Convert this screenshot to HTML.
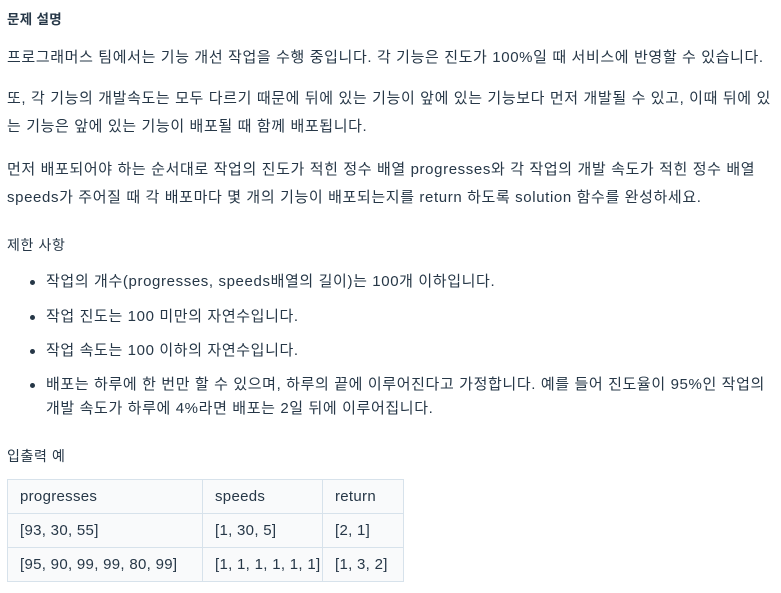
<!DOCTYPE html>
<html><head><meta charset="utf-8"><style>
body{margin:0;background:#fff;width:781px;height:593px;overflow:hidden;font-family:"Liberation Sans","Noto Sans CJK KR",sans-serif;color:#263747;letter-spacing:0.62px}
.a{position:absolute;left:7px;white-space:nowrap;font-size:15px;}
.s{font-size:14px}
.d{position:absolute;left:30px;width:5px;height:5px;border-radius:50%;background:#263747}
table{position:absolute;left:7px;top:479px;border-collapse:collapse;font-size:15px;background:#f9fafb;table-layout:fixed;width:396px;letter-spacing:0.3px}
td{border:1px solid #d7e2eb;padding:0 0 0 12px;height:33px;white-space:nowrap}
</style></head><body>
<div class="a" style="top:8px;font-weight:bold;font-size:13.5px;letter-spacing:0.3px">문제 설명</div>
<div class="a" style="top:46px">프로그래머스 팀에서는 기능 개선 작업을 수행 중입니다. 각 기능은 진도가 100%일 때 서비스에 반영할 수 있습니다.</div>
<div class="a" style="top:87px">또, 각 기능의 개발속도는 모두 다르기 때문에 뒤에 있는 기능이 앞에 있는 기능보다 먼저 개발될 수 있고, 이때 뒤에 있</div>
<div class="a" style="top:115px">는 기능은 앞에 있는 기능이 배포될 때 함께 배포됩니다.</div>
<div class="a" style="top:158px">먼저 배포되어야 하는 순서대로 작업의 진도가 적힌 정수 배열 progresses와 각 작업의 개발 속도가 적힌 정수 배열</div>
<div class="a" style="top:186px">speeds가 주어질 때 각 배포마다 몇 개의 기능이 배포되는지를 return 하도록 solution 함수를 완성하세요.</div>
<div class="a s" style="top:235px">제한 사항</div>
<div class="d" style="top:280px"></div><div class="a" style="left:46px;top:270px">작업의 개수(progresses, speeds배열의 길이)는 100개 이하입니다.</div>
<div class="d" style="top:315px"></div><div class="a" style="left:46px;top:305px">작업 진도는 100 미만의 자연수입니다.</div>
<div class="d" style="top:349px"></div><div class="a" style="left:46px;top:339px">작업 속도는 100 이하의 자연수입니다.</div>
<div class="d" style="top:383px"></div><div class="a" style="left:46px;top:373px">배포는 하루에 한 번만 할 수 있으며, 하루의 끝에 이루어진다고 가정합니다. 예를 들어 진도율이 95%인 작업의</div>
<div class="a" style="left:46px;top:397px">개발 속도가 하루에 4%라면 배포는 2일 뒤에 이루어집니다.</div>
<div class="a s" style="top:446px">입출력 예</div>
<table>
<colgroup><col style="width:195px"><col style="width:120px"><col style="width:81px"></colgroup>
<tr><td>progresses</td><td>speeds</td><td>return</td></tr>
<tr><td>[93, 30, 55]</td><td>[1, 30, 5]</td><td>[2, 1]</td></tr>
<tr><td>[95, 90, 99, 99, 80, 99]</td><td>[1, 1, 1, 1, 1, 1]</td><td>[1, 3, 2]</td></tr>
</table>
</body></html>
